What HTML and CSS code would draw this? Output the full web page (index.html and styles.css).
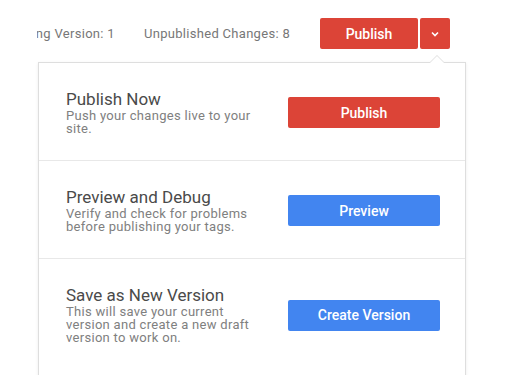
FILE: index.html
```html
<!DOCTYPE html>
<html lang="en">
<head>
  <meta charset="UTF-8">
  <title>Publish</title>
  <link rel="stylesheet" href="styles.css">
</head>
<body>
  <div class="topbar">
    <div class="status status-clip"><span>Working Version: 1</span></div>
    <div class="status">Unpublished Changes: 8</div>
    <div class="split-btn">
      <button class="btn btn-red btn-main">Publish</button>
      <button class="btn btn-red btn-toggle">
        <svg width="8" height="6" viewBox="0 0 8 6"><path d="M1 1.5 L4 4.5 L7 1.5" fill="none" stroke="#fff" stroke-width="1.6"/></svg>
      </button>
    </div>
  </div>

  <div class="menu">
    <div class="menu-row">
      <div class="menu-text">
        <div class="menu-title">Publish Now</div>
        <div class="menu-desc">Push your changes live to your site.</div>
      </div>
      <button class="btn btn-red btn-action">Publish</button>
    </div>
    <div class="menu-row">
      <div class="menu-text">
        <div class="menu-title">Preview and Debug</div>
        <div class="menu-desc">Verify and check for problems before publishing your tags.</div>
      </div>
      <button class="btn btn-blue btn-action">Preview</button>
    </div>
    <div class="menu-row">
      <div class="menu-text">
        <div class="menu-title">Save as New Version</div>
        <div class="menu-desc">This will save your current version and create a new draft version to work on.</div>
      </div>
      <button class="btn btn-blue btn-action">Create Version</button>
    </div>
  </div>
</body>
</html>
```

FILE: styles.css
```css
body {
  font-family: Roboto, "Liberation Sans", sans-serif;
  background: #fff;
  color: #444;
  margin: 0;
  overflow: hidden;
}

.topbar {
  display: flex;
  align-items: center;
  padding: 18px 57px 0 37px;
  height: 31px;
}

.status {
  font-size: 13px;
  letter-spacing: 0.3px;
  color: #777;
  white-space: nowrap;
  margin-right: 30px;
}

.status-clip {
  flex: 1;
  display: flex;
  justify-content: flex-end;
  overflow: hidden;
  margin-right: 29px;
}

.split-btn {
  display: flex;
  gap: 2px;
}

.btn {
  font-family: inherit;
  font-size: 14px;
  font-weight: 500;
  color: #fff;
  border: none;
  border-radius: 2px;
  cursor: pointer;
  padding: 0;
  height: 31px;
}

.btn-red {
  background-color: #dc4437;
}

.btn-blue {
  background-color: #4285f0;
}

.btn-main {
  width: 98px;
}

.btn-toggle {
  width: 30px;
  display: flex;
  align-items: center;
  justify-content: center;
}

.menu {
  position: relative;
  margin: 13px 0 0 38px;
  width: 426px;
  border: 1px solid #dedede;
  box-shadow: 0 1px 3px rgba(0, 0, 0, 0.08);
  background: #fff;
}

.menu::before,
.menu::after {
  content: "";
  position: absolute;
  border-style: solid;
  border-color: transparent;
}

.menu::before {
  top: -8px;
  left: 390px;
  border-width: 0 8px 8px 8px;
  border-bottom-color: #dedede;
}

.menu::after {
  top: -7px;
  left: 391px;
  border-width: 0 7px 7px 7px;
  border-bottom-color: #fff;
}

.menu-row {
  display: flex;
  align-items: center;
  justify-content: space-between;
  padding: 27px 25px 25px 27px;
  border-bottom: 1px solid #e8e8e8;
}

.menu-row:last-child {
  padding-bottom: 40px;
}

.menu-text {
  width: 196px;
}

.menu-title {
  font-size: 17px;
  line-height: 19px;
  color: #4a4a4a;
}

.menu-desc {
  font-size: 13px;
  line-height: 13px;
  letter-spacing: 0.3px;
  color: #808080;
}

.btn-action {
  width: 152px;
}
```
